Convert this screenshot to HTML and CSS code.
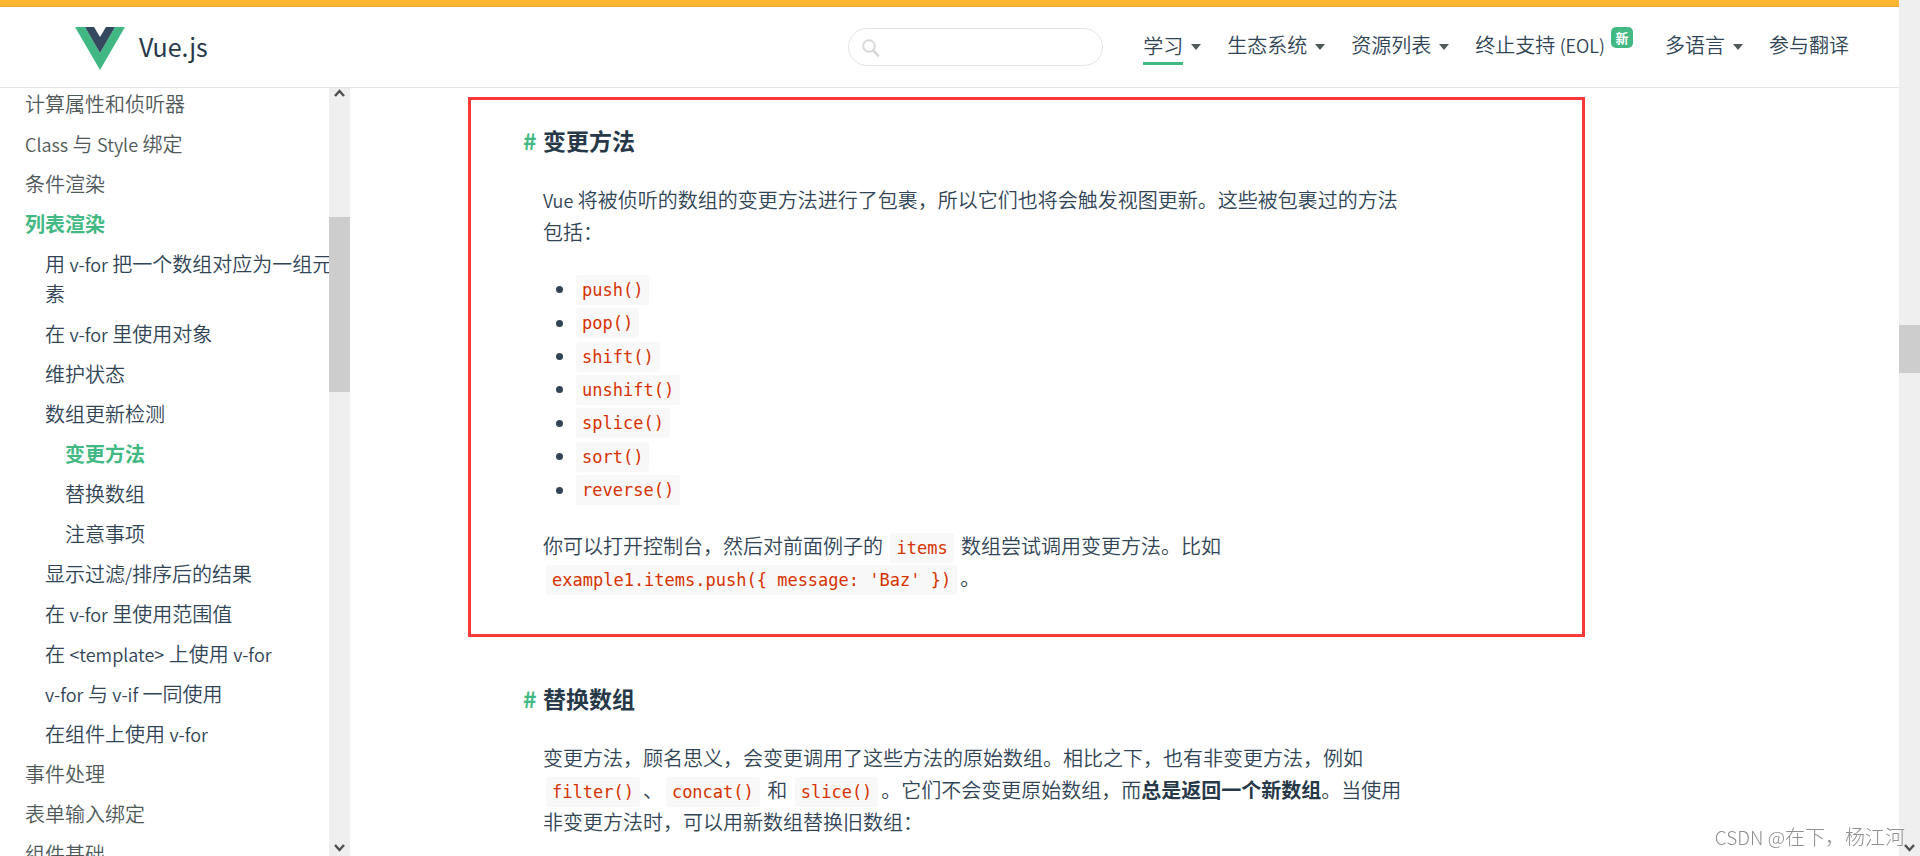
FILE: index.html
```html
<!DOCTYPE html>
<html lang="zh-CN">
<head>
<meta charset="utf-8">
<meta name="viewport" content="width=device-width, initial-scale=1">
<title>列表渲染 — Vue.js</title>
<link rel="stylesheet" href="styles.css">
</head>
<body>
<div class="page">
  <div class="banner"></div>
  <header class="header">
    <a class="logo" href="#">
      <svg class="logo-mark" viewBox="0 0 50 43" aria-hidden="true">
        <path fill="#41b883" d="M0 0h10l15 26L40 0h10L25 43z"/>
        <path fill="#35495e" d="M10 0h9l6 10 6-10h9L25 26z"/>
      </svg>
      <span class="logo-text">Vue.js</span>
    </a>
    <div class="header-right">
      <form class="search">
        <svg class="search-icon" viewBox="0 0 18 19" aria-hidden="true">
          <circle cx="7" cy="7" r="5.8" fill="none" stroke="#d8d8d8" stroke-width="2"/>
          <path d="M11.2 11.4l5.6 6" stroke="#d8d8d8" stroke-width="2.6"/>
        </svg>
        <input class="search-input" type="search" aria-label="搜索">
      </form>
      <nav class="menu">
        <a class="menu-link has-caret" href="#"><span class="current">学习</span></a>
        <a class="menu-link has-caret" href="#">生态系统</a>
        <a class="menu-link has-caret" href="#">资源列表</a>
        <a class="menu-link eol" href="#">终止支持 <span class="latin">(EOL)</span><span class="badge">新</span></a>
        <a class="menu-link has-caret" href="#">多语言</a>
        <a class="menu-link" href="#">参与翻译</a>
      </nav>
    </div>
  </header>
  <div class="body">
    <aside class="sidebar">
      <ul class="toc">
        <li><a href="#">计算属性和侦听器</a></li>
        <li><a href="#"><span class="latin">Class</span> 与 <span class="latin">Style</span> 绑定</a></li>
        <li><a href="#">条件渲染</a></li>
        <li><a class="active" href="#">列表渲染</a>
          <ul class="sub">
            <li><a href="#">用 <span class="latin">v-for</span> 把一个数组对应为一组元素</a></li>
            <li><a href="#">在 <span class="latin">v-for</span> 里使用对象</a></li>
            <li><a href="#">维护状态</a></li>
            <li><a href="#">数组更新检测</a>
              <ul class="sub">
                <li><a class="active" href="#">变更方法</a></li>
                <li><a href="#">替换数组</a></li>
                <li><a href="#">注意事项</a></li>
              </ul>
            </li>
            <li><a href="#">显示过滤<span class="latin">/</span>排序后的结果</a></li>
            <li><a href="#">在 <span class="latin">v-for</span> 里使用范围值</a></li>
            <li><a href="#">在 <span class="latin">&lt;template&gt;</span> 上使用 <span class="latin">v-for</span></a></li>
            <li><a href="#"><span class="latin">v-for</span> 与 <span class="latin">v-if</span> 一同使用</a></li>
            <li><a href="#">在组件上使用 <span class="latin">v-for</span></a></li>
          </ul>
        </li>
        <li><a href="#">事件处理</a></li>
        <li><a href="#">表单输入绑定</a></li>
        <li><a href="#">组件基础</a></li>
      </ul>
    </aside>
    <div class="scrollbar side-scroll">
      <svg class="arrow" viewBox="0 0 11 8" aria-hidden="true"><path d="M1 7l4.500-5L10 7" fill="none" stroke="#505050" stroke-width="2.500"/></svg>
      <div class="thumb side-thumb"></div>
      <svg class="arrow down" viewBox="0 0 11 8" aria-hidden="true"><path d="M1 1l4.500 5L10 1" fill="none" stroke="#505050" stroke-width="2.500"/></svg>
    </div>
    <main class="content">
      <section class="section framed">
        <h4 class="title"><a class="hash" href="#">#</a>变更方法</h4>
        <p class="text"><span class="latin">Vue</span> 将被侦听的数组的变更方法进行了包裹，所以它们也将会触发视图更新。这些被包裹过的方法包括：</p>
        <ul class="methods">
          <li><code>push()</code></li>
          <li><code>pop()</code></li>
          <li><code>shift()</code></li>
          <li><code>unshift()</code></li>
          <li><code>splice()</code></li>
          <li><code>sort()</code></li>
          <li><code>reverse()</code></li>
        </ul>
        <p class="text">你可以打开控制台，然后对前面例子的 <code>items</code> 数组尝试调用变更方法。比如 <code>example1.items.push({ message: 'Baz' })</code>。</p>
      </section>
      <section class="section">
        <h4 class="title"><a class="hash" href="#">#</a>替换数组</h4>
        <p class="text">变更方法，顾名思义，会变更调用了这些方法的原始数组。相比之下，也有非变更方法，例如 <code>filter()</code>、<code>concat()</code> 和 <code>slice()</code>。它们不会变更原始数组，而<strong>总是返回一个新数组</strong>。当使用非变更方法时，可以用新数组替换旧数组：</p>
      </section>
    </main>
  </div>
</div>
<div class="scrollbar page-scroll">
  <div class="thumb page-thumb"></div>
  <svg class="arrow down" viewBox="0 0 11 8" aria-hidden="true"><path d="M1 1l4.500 5L10 1" fill="none" stroke="#505050" stroke-width="2.500"/></svg>
</div>
<div class="watermark"><span class="watermark-site">CSDN @</span>在下，杨江河</div>
</body>
</html>
```
FILE: styles.css
```css
* {
  box-sizing: border-box;
}

body {
  margin: 0;
  height: 100vh;
  display: flex;
  overflow: hidden;
  background: #fff;
  color: #304455;
  font: 350 20px/32px "Noto Sans CJK SC", sans-serif;
}

a {
  color: inherit;
  text-decoration: none;
}

ul {
  list-style: none;
  margin: 0;
  padding: 0;
}

.latin {
  font-size: 18px;
}

.page {
  flex: 1;
  min-width: 0;
  display: flex;
  flex-direction: column;
}

.banner {
  flex: none;
  height: 7px;
  background: #ffb630;
  border-bottom: 1px solid #f2a530;
}

.header {
  flex: none;
  height: 80px;
  padding: 0 50px 0 75px;
  display: flex;
  align-items: center;
  justify-content: space-between;
}

.logo {
  display: flex;
  align-items: center;
  gap: 14px;
  padding-top: 2px;
}

.logo-mark {
  width: 50px;
  height: 43px;
}

.logo-text {
  padding-bottom: 4px;
  color: #273849;
  font-size: 25px;
  font-weight: 400;
}

.header-right {
  display: flex;
  align-items: center;
  gap: 40px;
}

.search {
  position: relative;
}

.search-icon {
  position: absolute;
  left: 14px;
  top: 11px;
  width: 18px;
  height: 19px;
}

.search-input {
  display: block;
  width: 255px;
  height: 38px;
  padding: 0 19px 0 38px;
  border: 1px solid #e3e3e3;
  border-radius: 19px;
  background: #fff;
  font: inherit;
  appearance: none;
}

.menu {
  display: flex;
  gap: 26px;
  padding-bottom: 4px;
}

.menu-link {
  display: flex;
  align-items: center;
  height: 36px;
  white-space: pre;
}

.has-caret::after {
  content: "";
  margin: 4px 0 0 8px;
  border: 5px solid transparent;
  border-top: 6px solid #4f5959;
  border-bottom: 0;
}

.current {
  padding-top: 4px;
  border-bottom: 3px solid #42b983;
}

.eol {
  margin-right: 6px;
}

.badge {
  align-self: flex-start;
  width: 22px;
  margin-left: 6px;
  border-radius: 5px;
  background: #42b983;
  color: #fff;
  font-size: 13px;
  font-weight: 700;
  line-height: 21px;
  text-align: center;
}

.body {
  flex: 1;
  min-height: 0;
  display: flex;
  border-top: 1px solid #e6e6e6;
}

.sidebar {
  flex: none;
  width: 329px;
  overflow: hidden;
  line-height: 30px;
}

.toc {
  margin-right: -16px;
  padding: 1px 0 0 25px;
  color: #4f5959;
}

.toc li {
  margin-bottom: 10px;
}

.toc a {
  display: block;
}

.sub {
  margin-top: 10px;
  padding-left: 20px;
  color: #304455;
}

.toc .active {
  color: #42b983;
  font-weight: 700;
}

.scrollbar {
  flex: none;
  width: 21px;
  display: flex;
  flex-direction: column;
  align-items: center;
  background: #efefef;
}

.side-scroll {
  padding: 1px 0 4px;
}

.page-scroll {
  padding-bottom: 4px;
}

.arrow {
  width: 11px;
  height: 8px;
}

.down {
  margin-top: auto;
}

.thumb {
  width: 100%;
  background: #cdcdcd;
}

.side-thumb {
  margin-top: 120px;
  height: 175px;
}

.page-thumb {
  margin-top: 325px;
  height: 48px;
}

.content {
  flex: 1;
  min-width: 0;
  padding: 9px 314px 0 118px;
}

.section {
  padding: 24px 72px 40px;
  border: 3px solid transparent;
}

.framed {
  border-color: #fb3939;
  margin-bottom: 18px;
}

.title {
  display: flex;
  margin: 0 0 28px;
  color: #273849;
  font-size: 23px;
  line-height: 32px;
}

.hash {
  width: 20px;
  margin-left: -20px;
  color: #42b983;
}

.text {
  max-width: 872px;
  margin: 0;
}

.methods {
  min-height: 234px;
  margin: 25px 0 23px;
  padding-left: 30px;
  display: grid;
  grid-auto-rows: 1fr;
}

.methods li {
  display: flex;
  align-items: center;
}

.methods li::before {
  content: "";
  width: 7px;
  height: 7px;
  margin: 0 10px 0 -17px;
  border-radius: 50%;
  background: #304455;
}

code {
  margin: 0 3px;
  padding: 5px 6px;
  border-radius: 3px;
  background: #f8f8f8;
  color: #d63200;
  font: 400 17px/20px "DejaVu Sans Mono", monospace;
  white-space: nowrap;
}

strong {
  color: #273849;
  font-weight: 700;
}

.watermark {
  position: fixed;
  right: 15px;
  bottom: 4px;
  color: #8f8f8f;
  font: 300 20px/30px "Noto Sans CJK TC", sans-serif;
  text-shadow: -1px -1px 0 #fff;
}

.watermark-site {
  font-size: 19px;
}
```
